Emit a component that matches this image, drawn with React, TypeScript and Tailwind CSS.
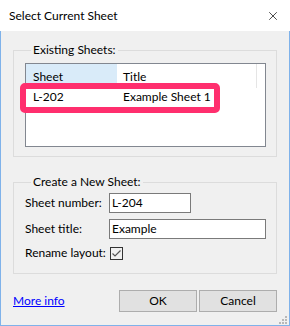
import { X } from 'lucide-react'

const font = { fontFamily: 'Lato, "Liberation Sans", sans-serif' }

function GroupBox({ label, children, className }: { label: string; children: React.ReactNode; className?: string }) {
  return (
    <fieldset className={`border border-[#dcdcdc] px-[11px] ${className ?? ''}`}>
      <legend className="ml-[6px] px-[2px] text-[12px] leading-[16px] text-black">{label}</legend>
      {children}
    </fieldset>
  )
}

export default function App() {
  return (
    <div className="w-[290px] h-[326px] flex flex-col text-[12px] text-black whitespace-nowrap" style={font}>
      <div className="h-[31px] shrink-0 bg-white flex items-center pl-[9px] pr-[10px]">
        <span className="flex-1 text-[12px] leading-[16px]">Select Current Sheet</span>
        <X size={14} strokeWidth={1.2} className="text-black" />
      </div>

      <div className="flex-1 flex flex-col bg-[#f0f0f0] border-x border-b border-[#7fb2ea] px-3 pt-[11px]">
        <GroupBox label="Existing Sheets:" className="pb-[9px] pr-[10px]">
          <div className="relative mt-[5px] h-[84px] border border-[#828790] bg-white">
            <div className="flex h-[24px] text-[12px] leading-[16px]">
              <div className="w-[91px] bg-[#d9ebf9] pl-[7px] pt-[5px]">Sheet</div>
              <div className="w-[140px] border-r border-[#e5e5e5] pl-[6px] pt-[5px]">Title</div>
            </div>
            <div className="flex h-[18px] items-center leading-[16px]">
              <div className="w-[91px] pl-[7px]">L-202</div>
              <div className="pl-[6px]">Example Sheet 1</div>
            </div>
            <div className="absolute left-[-6px] top-[19px] w-[200px] h-[30px] rounded-[5px] border-[6px] border-[#ff2f6e]" />
          </div>
        </GroupBox>

        <GroupBox label="Create a New Sheet:" className="mt-[17px] pb-[13px] pr-[10px]">
          <div className="mt-[3px] flex flex-col gap-[6px]">
            <div className="flex items-center h-[20px]">
              <span className="w-[84px] shrink-0">Sheet number:</span>
              <div className="w-[82px] h-[20px] border border-[#7a7a7a] bg-white pl-[2px] leading-[18px]">L-204</div>
            </div>
            <div className="flex items-center h-[20px]">
              <span className="w-[84px] shrink-0">Sheet title:</span>
              <div className="flex-1 h-[20px] border border-[#7a7a7a] bg-white pl-[2px] leading-[18px]">Example</div>
            </div>
            <div className="flex items-center h-[14px] mt-[1px]">
              <span className="w-[85px] shrink-0">Rename layout:</span>
              <div className="w-[13px] h-[13px] border border-[#333333] bg-[#f0f0f0] flex items-center justify-center">
                <svg width="11" height="11" viewBox="0 0 11 11">
                  <path d="M1.5 5.5 L4 8 L9.5 2.5" fill="none" stroke="#555555" strokeWidth="1.2" />
                </svg>
              </div>
            </div>
          </div>
        </GroupBox>

        <div className="mt-[16px] flex items-center">
          <a href="#" className="flex-1 text-[#0000ff] underline leading-[16px]">More info</a>
          <div className="flex gap-[2px]">
            <button type="button" className="w-[78px] h-[22px] border border-[#adadad] bg-[#e1e1e1] text-[12px]">OK</button>
            <button type="button" className="w-[78px] h-[22px] border border-[#adadad] bg-[#e1e1e1] text-[12px]">Cancel</button>
          </div>
        </div>

        <div className="relative flex-1">
          <svg className="absolute right-[-10px] bottom-[1px]" width="8" height="8" viewBox="0 0 8 8">
            <rect x="6" y="0" width="2" height="2" fill="#b8b8b8" />
            <rect x="3" y="3" width="2" height="2" fill="#b8b8b8" />
            <rect x="6" y="3" width="2" height="2" fill="#b8b8b8" />
            <rect x="0" y="6" width="2" height="2" fill="#b8b8b8" />
            <rect x="3" y="6" width="2" height="2" fill="#b8b8b8" />
            <rect x="6" y="6" width="2" height="2" fill="#b8b8b8" />
          </svg>
        </div>
      </div>
    </div>
  )
}
